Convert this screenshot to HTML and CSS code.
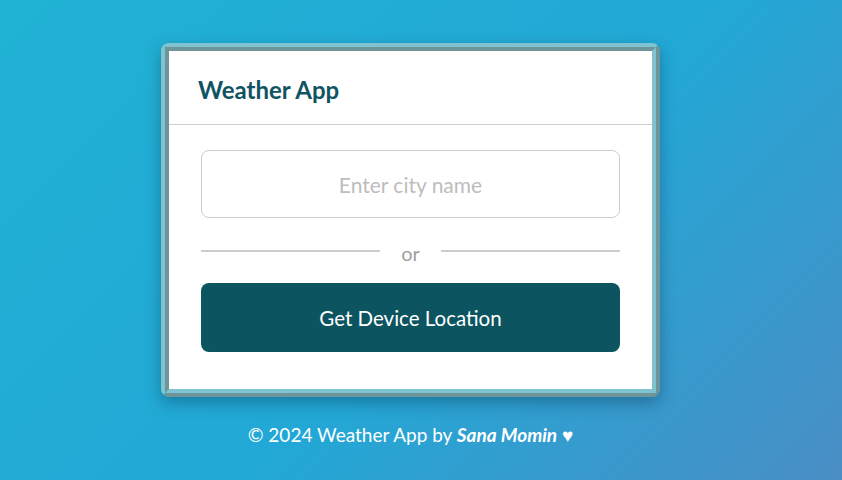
FILE: index.html
```html
<!DOCTYPE html>
<html lang="en">
<head>
<meta charset="utf-8">
<title>Weather App</title>
<link rel="stylesheet" href="styles.css">
</head>
<body>
<main class="page">
  <section class="card">
    <div class="card-inner">
      <header class="card-header">
        <h1 class="title">Weather App</h1>
      </header>
      <div class="card-body">
        <input class="city-input" type="text" placeholder="Enter city name">
        <div class="divider">
          <span class="divider-line"></span>
          <span class="divider-text">or</span>
          <span class="divider-line"></span>
        </div>
        <button class="location-btn" type="button">Get Device Location</button>
      </div>
    </div>
  </section>
  <footer class="footer">© 2024 Weather App by <b class="author">Sana Momin</b> ♥</footer>
</main>
</body>
</html>
```

FILE: styles.css
```css
* { box-sizing: border-box; }

html, body {
  margin: 0;
  height: 100%;
}

body {
  font-family: Lato, "Open Sans", sans-serif;
  background: linear-gradient(135deg, #21b2d4 0%, #22a8d6 55%, #4a8ec5 100%);
}

.page {
  height: 480px;
  display: flex;
  flex-direction: column;
  align-items: center;
  padding: 43px 21px 0 0;
}

.card {
  width: 499px;
  border: 4px solid;
  border-color: #7ec3cf #6e9599 #6e9599 #7ec3cf;
  border-radius: 8px;
  box-shadow: 0 6px 16px rgba(0, 40, 70, 0.35);
}

.card-inner {
  border: 4px solid;
  border-color: #6e9599 #7ec3cf #7ec3cf #6e9599;
  background: #fff;
}

.card-header {
  height: 74px;
  border-bottom: 1px solid #cccccc;
  display: flex;
  align-items: center;
  padding: 3px 29px 0;
}

.title {
  margin: 0;
  font-size: 24px;
  font-weight: 700;
  color: #0f5463;
}

.card-body {
  padding: 25px 32px 37px 32px;
  display: flex;
  flex-direction: column;
}

.city-input {
  height: 68px;
  width: 100%;
  border: 1px solid #cccccc;
  border-radius: 8px;
  font-family: inherit;
  font-size: 21px;
  text-align: center;
  outline: none;
  color: #333;
}

.city-input::placeholder {
  color: #bdbdbd;
}

.divider {
  display: flex;
  align-items: center;
  height: 65px;
}

.divider-line {
  flex: 1;
  height: 2px;
  background: #cccccc;
}

.divider-text {
  margin: 4px 21px 0;
  font-size: 20px;
  color: #a0a0a0;
}

.location-btn {
  height: 69px;
  width: 100%;
  border: none;
  border-radius: 8px;
  background: #0c5460;
  color: #ffffff;
  font-family: inherit;
  font-size: 20.5px;
}

.footer {
  margin-top: 26px;
  color: #ffffff;
  font-size: 19px;
}

.author {
  font-style: italic;
  font-weight: 700;
}
```
